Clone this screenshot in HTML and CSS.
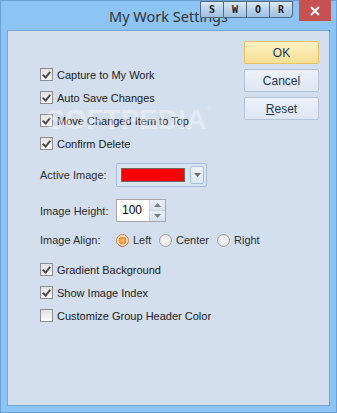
FILE: index.html
```html
<!DOCTYPE html>
<html lang="en">
<head>
    <meta charset="UTF-8">
    <title>My Work Settings</title>
    <link rel="stylesheet" href="styles.css">
</head>
<body>
    <div class="window">
        <div class="titlebar">
            <span class="title">My Work Settings</span>
            <div class="tabs">
                <span class="tab">S</span>
                <span class="tab">W</span>
                <span class="tab">O</span>
                <span class="tab last">R</span>
            </div>
            <div class="close">
                <svg width="10" height="10" viewBox="0 0 10 10"><path d="M1 1L9 9M9 1L1 9" stroke="#fff" stroke-width="2"/></svg>
            </div>
        </div>
        <div class="client">
            <div class="settings">
                <label class="check"><span class="box on"></span>Capture to My Work</label>
                <label class="check"><span class="box on"></span>Auto Save Changes</label>
                <label class="check"><span class="box on"></span>Move Changed Item to Top</label>
                <label class="check"><span class="box on"></span>Confirm Delete</label>

                <div class="field combo-row">
                    <span class="label">Active Image:</span>
                    <div class="combo">
                        <span class="swatch"></span>
                        <span class="drop"><svg width="7" height="4" viewBox="0 0 7 4"><path d="M0 0H7L3.5 4Z" fill="#6d6d6d"/></svg></span>
                    </div>
                </div>
                <div class="field spin-row">
                    <span class="label">Image Height:</span>
                    <div class="spin">
                        <span class="value">100</span>
                        <div class="arrows">
                            <span><svg width="7" height="4" viewBox="0 0 7 4"><path d="M0 4H7L3.5 0Z" fill="#7a7a7a"/></svg></span>
                            <span><svg width="7" height="4" viewBox="0 0 7 4"><path d="M0 0H7L3.5 4Z" fill="#7a7a7a"/></svg></span>
                        </div>
                    </div>
                </div>
                <div class="field radio-row">
                    <span class="label">Image Align:</span>
                    <label class="radio r-left"><span class="dot on"></span>Left</label>
                    <label class="radio r-center"><span class="dot"></span>Center</label>
                    <label class="radio"><span class="dot"></span>Right</label>
                </div>

                <label class="check first-lower"><span class="box on"></span>Gradient Background</label>
                <label class="check"><span class="box on"></span>Show Image Index</label>
                <label class="check"><span class="box"></span>Customize Group Header Color</label>
            </div>
            <div class="actions">
                <button class="btn ok">OK</button>
                <button class="btn">Cancel</button>
                <button class="btn"><u>R</u>eset</button>
            </div>
            <div class="watermark">SOFTPEDIA<sup>®</sup></div>
        </div>
    </div>
</body>
</html>
```
FILE: styles.css
```css
body {
    margin: 0;
    font-family: "Liberation Sans", Arial, sans-serif;
    font-size: 11px;
    color: #1b1b1b;
}
.window {
    position: relative;
    width: 335px;
    height: 411px;
    background: #8cc4f5;
    border: 1px solid #6c9fd3;
    display: flex;
    flex-direction: column;
}
.titlebar {
    position: relative;
    height: 29px;
    text-align: center;
}
.title {
    display: inline-block;
    margin-top: 5px;
    font-family: "Noto Sans", sans-serif;
    font-size: 14.5px;
    color: #333;
}
.tabs {
    position: absolute;
    top: 0;
    left: 199px;
    display: flex;
}
.tab {
    width: 22px;
    height: 15px;
    border: 1px solid #4f6a86;
    border-left: none;
    background: linear-gradient(#dce9f6, #b6d0ea 55%, #9fc1e2);
    font-family: "DejaVu Sans Mono", monospace;
    font-size: 10px;
    font-weight: bold;
    line-height: 15px;
    text-align: center;
    color: #1a1a1a;
}
.tab:first-child {
    border-left: 1px solid #4f6a86;
}
.tab.last {
    border-bottom-right-radius: 4px;
}
.close {
    position: absolute;
    top: -1px;
    right: 5px;
    width: 32px;
    height: 21px;
    background: #c75050;
    display: flex;
    align-items: center;
    justify-content: center;
}
.client {
    position: relative;
    flex: 1;
    margin: 0 6px 6px 6px;
    background: #d3deee;
    border: 1px solid #72a4d6;
    display: flex;
}
.settings {
    flex: 1;
    min-width: 0;
    padding: 32px 0 0 32px;
    display: flex;
    flex-direction: column;
}
.check {
    display: flex;
    align-items: center;
    height: 23px;
    white-space: nowrap;
}
.box {
    width: 11px;
    height: 11px;
    margin-right: 4px;
    border: 1px solid #8d8d8d;
    background: linear-gradient(#e2e2e2, #fbfbfb);
    position: relative;
    flex-shrink: 0;
}
.box.on::after {
    content: "";
    position: absolute;
    left: 3px;
    top: 1px;
    width: 3px;
    height: 6px;
    border: solid #4c4c4c;
    border-width: 0 2px 2px 0;
    transform: rotate(40deg);
}
.field {
    display: flex;
    align-items: center;
    color: #2e2e2e;
    white-space: nowrap;
}
.label {
    width: 76px;
    flex-shrink: 0;
}
.combo-row {
    margin-top: 8px;
}
.combo {
    width: 89px;
    height: 22px;
    border: 1px solid #aabdd6;
    border-radius: 2px;
    background: #d9e4f2;
    display: flex;
    align-items: center;
}
.swatch {
    width: 62px;
    height: 12px;
    margin-left: 4px;
    background: #ff0000;
    border: 1px solid #6a6a6a;
}
.drop {
    width: 12px;
    height: 16px;
    margin-left: 5px;
    border: 1px solid #aabdd6;
    border-radius: 2px;
    background: linear-gradient(#eef3fa, #dce6f3);
    display: flex;
    align-items: center;
    justify-content: center;
}
.spin-row {
    margin-top: 12px;
}
.spin {
    width: 48px;
    height: 21px;
    border: 1px solid #a7a7a7;
    background: #fff;
    display: flex;
}
.value {
    flex: 1;
    padding-left: 5px;
    line-height: 21px;
    font-size: 12px;
    color: #000;
}
.arrows {
    width: 15px;
    display: flex;
    flex-direction: column;
    border-left: 1px solid #c9d4e3;
}
.arrows span {
    flex: 1;
    display: flex;
    align-items: center;
    justify-content: center;
    background: linear-gradient(#eaf0f8, #d6e1ef);
}
.arrows span + span {
    border-top: 1px solid #c9d4e3;
}
.radio-row {
    margin-top: 8px;
    height: 20px;
}
.radio {
    display: flex;
    align-items: center;
    flex-shrink: 0;
}
.r-left {
    width: 43px;
}
.r-center {
    width: 58px;
}
.dot {
    width: 11px;
    height: 11px;
    margin-right: 4px;
    border: 1px solid #a2a2a2;
    border-radius: 50%;
    background: radial-gradient(circle, #f1f1f1 40%, #d6d6d6);
    flex-shrink: 0;
}
.dot.on {
    border-color: #c7783a;
    background: radial-gradient(circle, #ffc88a 0, #f08a1e 45%, #fde3c8 55%, #f7f7f7);
}
.first-lower {
    margin-top: 8px;
}
.actions {
    flex-shrink: 0;
    padding: 10px 10px 0 0;
    display: flex;
    flex-direction: column;
    gap: 5px;
}
.btn {
    width: 75px;
    height: 23px;
    padding: 0;
    font-family: "Liberation Sans", Arial, sans-serif;
    font-size: 12px;
    color: #1e3656;
    border: 1px solid #b3c3d8;
    border-radius: 2px;
    background: linear-gradient(#edf2fa, #dde6f3);
}
.btn.ok {
    border-color: #e6c35c;
    background: linear-gradient(#fdf1c5, #f7df94);
}
.watermark {
    position: absolute;
    left: 38px;
    top: 73px;
    font-family: "Liberation Sans", sans-serif;
    font-weight: bold;
    font-size: 28px;
    color: rgba(255, 255, 255, 0.4);
    pointer-events: none;
}
.watermark sup {
    font-size: 8px;
    font-weight: normal;
    vertical-align: top;
}
```
